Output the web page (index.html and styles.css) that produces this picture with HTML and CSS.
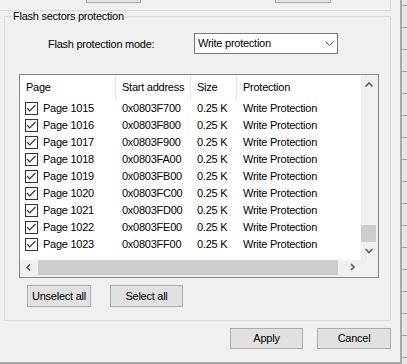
FILE: index.html
```html
<!DOCTYPE html>
<html>
<head>
<meta charset="utf-8">
<link rel="stylesheet" href="styles.css">
</head>
<body>
<div class="screen">
  <div class="window">
    <div class="topframe">
      <div class="stub stub-a"></div>
      <div class="stub stub-b"></div>
    </div>
    <fieldset class="group">
      <legend class="group-title">Flash sectors protection</legend>
      <div class="mode-row">
        <span class="mode-label">Flash protection mode:</span>
        <div class="combo">
          <span class="combo-text">Write protection</span>
          <svg class="combo-arrow" width="9" height="6" viewBox="0 0 9 6"><polyline points="0.5,0.5 4.5,4.5 8.5,0.5" fill="none" stroke="#555" stroke-width="1"/></svg>
        </div>
      </div>
      <div class="list">
        <div class="list-view">
          <div class="list-header">
            <div class="hcell">Page</div>
            <div class="hcell">Start address</div>
            <div class="hcell">Size</div>
            <div class="hcell last">Protection</div>
          </div>
          <div class="row"><div class="cell first"><span class="check"><svg width="11" height="11" viewBox="0 0 11 11"><polyline points="1,5 3.7,7.8 9.5,2" fill="none" stroke="#333" stroke-width="1.2"/></svg></span>Page 1015</div><div class="cell">0x0803F700</div><div class="cell">0.25 K</div><div class="cell">Write Protection</div></div>
          <div class="row"><div class="cell first"><span class="check"><svg width="11" height="11" viewBox="0 0 11 11"><polyline points="1,5 3.7,7.8 9.5,2" fill="none" stroke="#333" stroke-width="1.2"/></svg></span>Page 1016</div><div class="cell">0x0803F800</div><div class="cell">0.25 K</div><div class="cell">Write Protection</div></div>
          <div class="row"><div class="cell first"><span class="check"><svg width="11" height="11" viewBox="0 0 11 11"><polyline points="1,5 3.7,7.8 9.5,2" fill="none" stroke="#333" stroke-width="1.2"/></svg></span>Page 1017</div><div class="cell">0x0803F900</div><div class="cell">0.25 K</div><div class="cell">Write Protection</div></div>
          <div class="row"><div class="cell first"><span class="check"><svg width="11" height="11" viewBox="0 0 11 11"><polyline points="1,5 3.7,7.8 9.5,2" fill="none" stroke="#333" stroke-width="1.2"/></svg></span>Page 1018</div><div class="cell">0x0803FA00</div><div class="cell">0.25 K</div><div class="cell">Write Protection</div></div>
          <div class="row"><div class="cell first"><span class="check"><svg width="11" height="11" viewBox="0 0 11 11"><polyline points="1,5 3.7,7.8 9.5,2" fill="none" stroke="#333" stroke-width="1.2"/></svg></span>Page 1019</div><div class="cell">0x0803FB00</div><div class="cell">0.25 K</div><div class="cell">Write Protection</div></div>
          <div class="row"><div class="cell first"><span class="check"><svg width="11" height="11" viewBox="0 0 11 11"><polyline points="1,5 3.7,7.8 9.5,2" fill="none" stroke="#333" stroke-width="1.2"/></svg></span>Page 1020</div><div class="cell">0x0803FC00</div><div class="cell">0.25 K</div><div class="cell">Write Protection</div></div>
          <div class="row"><div class="cell first"><span class="check"><svg width="11" height="11" viewBox="0 0 11 11"><polyline points="1,5 3.7,7.8 9.5,2" fill="none" stroke="#333" stroke-width="1.2"/></svg></span>Page 1021</div><div class="cell">0x0803FD00</div><div class="cell">0.25 K</div><div class="cell">Write Protection</div></div>
          <div class="row"><div class="cell first"><span class="check"><svg width="11" height="11" viewBox="0 0 11 11"><polyline points="1,5 3.7,7.8 9.5,2" fill="none" stroke="#333" stroke-width="1.2"/></svg></span>Page 1022</div><div class="cell">0x0803FE00</div><div class="cell">0.25 K</div><div class="cell">Write Protection</div></div>
          <div class="row"><div class="cell first"><span class="check"><svg width="11" height="11" viewBox="0 0 11 11"><polyline points="1,5 3.7,7.8 9.5,2" fill="none" stroke="#333" stroke-width="1.2"/></svg></span>Page 1023</div><div class="cell">0x0803FF00</div><div class="cell">0.25 K</div><div class="cell">Write Protection</div></div>
        </div>
        <div class="vscroll">
          <div class="sbtn"><svg width="17" height="17" viewBox="0 0 17 17"><polyline points="4.5,11.5 8,8 11.5,11.5" fill="none" stroke="#606060" stroke-width="1.7"/></svg></div>
          <div class="vtrack"><div class="vthumb"></div></div>
          <div class="sbtn"><svg width="17" height="17" viewBox="0 0 17 17"><polyline points="4.5,6 8,9.5 11.5,6" fill="none" stroke="#606060" stroke-width="1.7"/></svg></div>
        </div>
        <div class="hscroll">
          <div class="sbtn"><svg width="17" height="17" viewBox="0 0 17 17"><polyline points="10,4.5 7,7.5 10,10.5" fill="none" stroke="#606060" stroke-width="1.7"/></svg></div>
          <div class="htrack"><div class="hthumb"></div></div>
          <div class="sbtn"><svg width="17" height="17" viewBox="0 0 17 17"><polyline points="7,4 10,7 7,10" fill="none" stroke="#606060" stroke-width="1.7"/></svg></div>
        </div>
        <div class="corner"></div>
      </div>
      <div class="list-actions">
        <button class="btn btn-unselect">Unselect all</button>
        <button class="btn btn-select">Select all</button>
      </div>
    </fieldset>
    <div class="dialog-actions">
      <button class="btn btn-apply">Apply</button>
      <button class="btn btn-cancel">Cancel</button>
    </div>
  </div>
  <div class="edge"></div>
</div>
</body>
</html>
```
FILE: styles.css
```css
* { box-sizing: border-box; }
html, body { margin: 0; padding: 0; }
body {
  width: 407px;
  height: 364px;
  overflow: hidden;
  background: #f0f0f0;
  font-family: "Liberation Sans", Arial, sans-serif;
  font-size: 11px;
  letter-spacing: -0.25px;
  color: #000;
}
.screen {
  display: flex;
  width: 407px;
  height: 364px;
}
.window {
  width: 400px;
  height: 364px;
  border-bottom: 2px solid #a8a8a8;
  display: flex;
  flex-direction: column;
}
.topframe {
  width: 391px;
  height: 11px;
  border-right: 1px solid #dcdcdc;
  border-bottom: 1px solid #dcdcdc;
  display: flex;
  align-items: flex-start;
}
.stub {
  height: 3px;
  background: #e1e1e1;
  border: 1px solid #adadad;
  border-top: none;
}
.stub-a { margin-left: 86px; width: 55px; }
.stub-b { margin-left: 134px; width: 56px; }

.group {
  margin: 0 0 0 4px;
  padding: 0 0 13px 0;
  width: 387px;
  min-width: 0;
  border: 1px solid #dcdcdc;
}
.group-title {
  padding: 0 1px;
  margin-left: 7px;
  line-height: 11px;
  height: 11px;
}
.mode-row {
  margin-top: 11px;
  padding-left: 43px;
  height: 21px;
  display: flex;
  align-items: center;
}
.mode-label {
  width: 146px;
}
.combo {
  width: 144px;
  height: 21px;
  border: 1px solid #7a7a7a;
  background: #fff;
  display: flex;
  align-items: center;
  justify-content: space-between;
  padding: 0 3px 0 3px;
}
.combo-text { line-height: 19px; }
.combo-arrow { display: block; margin-top: 1px; }

.list {
  margin: 20px 0 0 14px;
  width: 360px;
  height: 204px;
  border: 1px solid #828790;
  display: grid;
  grid-template-columns: 341px 17px;
  grid-template-rows: 185px 17px;
}
.list-view {
  background: #fff;
  overflow: hidden;
}
.list-header, .row {
  display: grid;
  grid-template-columns: 96px 75px 46px 1fr;
}
.list-header { height: 25px; }
.hcell {
  padding-left: 6px;
  line-height: 25px;
  border-right: 1px solid #e5e5e5;
  white-space: nowrap;
}
.hcell.last { border-right: none; }
.row { height: 17px; }
.cell {
  padding-left: 6px;
  line-height: 17px;
  white-space: nowrap;
}
.cell.first {
  display: flex;
  align-items: center;
  padding-left: 5px;
  gap: 5px;
}
.check {
  width: 13px;
  height: 13px;
  border: 1px solid #333;
  background: #fff;
  display: block;
  flex: none;
}
.check svg { display: block; }

.vscroll {
  background: #f0f0f0;
  display: flex;
  flex-direction: column;
}
.sbtn { width: 17px; height: 17px; flex: none; }
.sbtn svg { display: block; }
.vtrack {
  flex: 1;
  display: flex;
  flex-direction: column;
  justify-content: flex-end;
}
.vthumb {
  width: 15px;
  height: 17px;
  margin-bottom: 1px;
  background: #cdcdcd;
}
.hscroll {
  background: #f0f0f0;
  display: flex;
}
.htrack { flex: 1; }
.hthumb {
  margin-left: 1px;
  width: 300px;
  height: 15px;
  background: #cdcdcd;
}
.corner { background: #f0f0f0; }

.btn {
  font-family: inherit;
  font-size: 11px;
  letter-spacing: -0.25px;
  color: #000;
  background: #e1e1e1;
  border: 1px solid #adadad;
  padding: 0;
  margin: 0;
  height: 22px;
  line-height: 20px;
  text-align: center;
}
.list-actions {
  margin-top: 7px;
  padding-left: 22px;
  display: flex;
  gap: 19px;
}
.btn-unselect { width: 64px; }
.btn-select { width: 73px; }
.dialog-actions {
  margin-top: 7px;
  padding-right: 9px;
  display: flex;
  justify-content: flex-end;
  gap: 14px;
}
.dialog-actions .btn { height: 21px; line-height: 19px; }
.btn-apply { width: 73px; }
.btn-cancel { width: 74px; }

.edge {
  width: 7px;
  height: 364px;
  border-left: 2px solid #a9a9a9;
  background: repeating-linear-gradient(to bottom, #e6e6e6 0 5px, #a0a0a0 5px 6px, #e6e6e6 6px 22px);
}
```
